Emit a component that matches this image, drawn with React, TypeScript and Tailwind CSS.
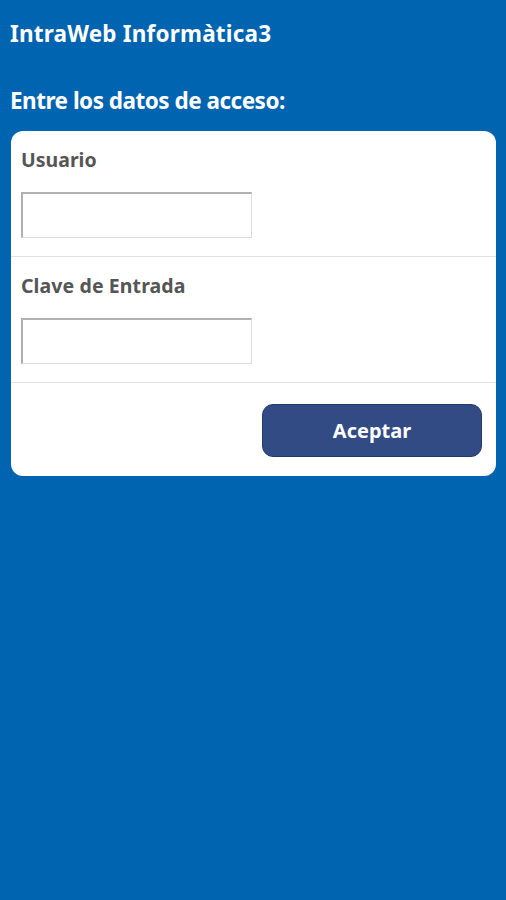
import React from "react";

export default function App() {
  return (
    <div
      className="w-[506px] h-[900px] bg-[#0064b1] overflow-hidden"
      style={{ fontFamily: '"Noto Sans", "Open Sans", sans-serif' }}
    >
      <div className="pl-[10px] pt-[19px] text-white font-bold text-[22.5px] leading-[30px] tracking-[0.2px]">
        IntraWeb Informàtica3
      </div>
      <div className="pl-[10px] pt-[37px] text-white font-bold text-[22.5px] leading-[30px] tracking-[-0.5px]">
        Entre los datos de acceso:
      </div>
      <div className="mx-[11px] mt-[15px] w-[485px] bg-white rounded-[12px] overflow-hidden">
        <div className="px-[10px] border-b border-[#e2e2e2] h-[126px] pt-[16px]">
          <div className="text-[19.5px] leading-[26px] font-bold text-[#555555]">Usuario</div>
          <div className="mt-[19px] w-[231px] h-[46px] border border-[#dcdcdc] border-t-[#b0b0b0] border-l-[#b0b0b0] border-t-2 border-l-2 bg-white" />
        </div>
        <div className="px-[10px] border-b border-[#e2e2e2] h-[126px] pt-[16px]">
          <div className="text-[19.5px] leading-[26px] font-bold text-[#555555] tracking-[0.1px]">Clave de Entrada</div>
          <div className="mt-[19px] w-[231px] h-[46px] border border-[#dcdcdc] border-t-[#b0b0b0] border-l-[#b0b0b0] border-t-2 border-l-2 bg-white" />
        </div>
        <div className="flex justify-end pr-[14px] pt-[21px] pb-[19px]">
          <div className="w-[220px] h-[53px] rounded-[11px] bg-[#324b85] border border-[#24386a] flex items-center justify-center text-white font-bold text-[20px]">
            Aceptar
          </div>
        </div>
      </div>
    </div>
  );
}
